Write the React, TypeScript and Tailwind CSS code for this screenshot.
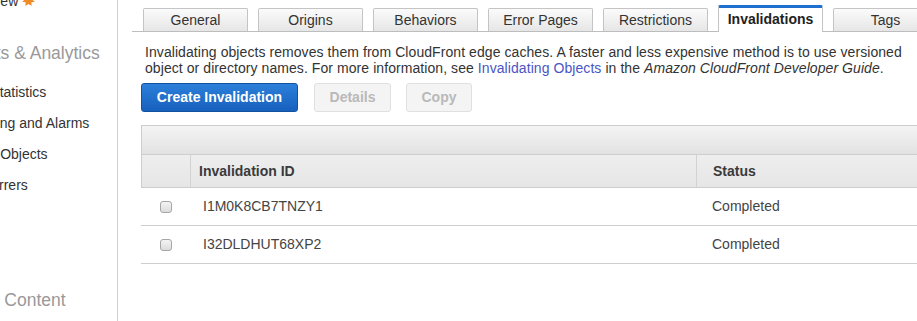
import React from "react";

const TABS = ["General", "Origins", "Behaviors", "Error Pages", "Restrictions", "Invalidations", "Tags"];
const ACTIVE = "Invalidations";

const ROWS = [
  { id: "I1M0K8CB7TNZY1", status: "Completed" },
  { id: "I32DLDHUT68XP2", status: "Completed" },
];

// sidebar is scrolled horizontally; each label keeps its own clip offset
const NAV = [
  { label: "Cache Statistics", cls: "ml-[-54px]" },
  { label: "Monitoring and Alarms", cls: "ml-[-50px]" },
  { label: "Popular Objects", cls: "ml-[-52px]" },
  { label: "Top Referrers", cls: "ml-[-57px]" },
];

function Burst() {
  return (
    <svg width="13" height="13" viewBox="0 0 14 14" className="inline-block ml-[4px] align-[-1px]">
      <path
        d="M7 0 L8.6 3.6 L12.6 2.4 L10.8 6 L14 8.4 L10 9 L10.4 13 L7 10.8 L3.6 13 L4 9 L0 8.4 L3.2 6 L1.4 2.4 L5.4 3.6 Z"
        fill="#f08a24"
      />
    </svg>
  );
}

function Checkbox() {
  return (
    <span className="block w-[12px] h-[12px] rounded-[3px] border border-[#a6a6a6] bg-gradient-to-b from-[#f4f4f4] to-[#dcdcdc]" />
  );
}

export default function App() {
  return (
    <div className="flex w-[917px] h-[321px] overflow-hidden bg-white text-[14px] text-[#333] font-['Liberation_Sans',Arial,sans-serif]">
      {/* Sidebar (scrolled, clipped) */}
      <div className="w-[118px] shrink-0 border-r border-[#cfcfcf] overflow-hidden">
        <div className="mt-[-9px] whitespace-nowrap">
          <div className="ml-[-56px] h-[20px] leading-[20px] text-[#333]">
            What's New
            <Burst />
          </div>
          <div className="ml-[-52px] mt-[30px] h-[24px] leading-[24px] text-[17.5px] text-[#999]">
            Reports &amp; Analytics
          </div>
          <div className="mt-[12px]">
            {NAV.map((n) => (
              <div key={n.label} className={`${n.cls} h-[31px] leading-[31px] text-[#333]`}>
                {n.label}
              </div>
            ))}
          </div>
          <div className="ml-[-55px] mt-[87px] h-[24px] leading-[24px] text-[17.5px] text-[#999]">Private Content</div>
        </div>
      </div>

      {/* Main */}
      <div className="flex-1 min-w-0 pl-[14px] overflow-hidden">
        {/* Tabs */}
        <div className="flex items-end gap-[10px] h-[32px] pl-[11px] border-b border-[#bdbdbd]">
          {TABS.map((t) =>
            t === ACTIVE ? (
              <div
                key={t}
                className="w-[105px] h-[27px] mb-[-1px] shrink-0 flex items-center justify-center bg-white border-x border-[#c4c4c4] border-t-[3px] border-t-[#1f6fce] rounded-t-[2px] font-bold text-[#222] pb-[2px]"
              >
                {t}
              </div>
            ) : (
              <div
                key={t}
                className="w-[105px] h-[23px] shrink-0 flex items-center justify-center border border-b-0 border-[#c4c4c4] rounded-t-[2px] bg-gradient-to-b from-[#fbfbfb] to-[#e6e6e6] text-[#333]"
              >
                {t}
              </div>
            )
          )}
        </div>

        <div className="pl-[9px]">
          <p className="mt-[12px] pl-[4px] leading-[16px] tracking-[0.07px] text-[#333] whitespace-nowrap">
            Invalidating objects removes them from CloudFront edge caches. A faster and less expensive method is to use versioned
            <br />
            object or directory names. For more information, see{" "}
            <span className="text-[#4a55c4]">Invalidating Objects</span> in the{" "}
            <i>Amazon CloudFront Developer Guide</i>.
          </p>

          {/* Buttons */}
          <div className="mt-[7px] flex items-center">
            <button className="w-[157px] h-[29px] rounded-[3px] border border-[#14529f] bg-gradient-to-b from-[#2c80da] to-[#1760bd] text-white font-bold">
              Create Invalidation
            </button>
            <button className="ml-[16px] w-[77px] h-[29px] rounded-[3px] border border-[#e0e0e0] bg-[#f4f4f4] text-[#b9b9b9] font-bold">
              Details
            </button>
            <button className="ml-[15px] w-[66px] h-[29px] rounded-[3px] border border-[#e0e0e0] bg-[#f4f4f4] text-[#b9b9b9] font-bold">
              Copy
            </button>
          </div>

          {/* Table */}
          <div className="mt-[13px] w-[900px]">
            <div className="h-[29px] border-t border-l border-[#cdcdcd] bg-gradient-to-b from-[#f4f4f4] to-[#e2e2e2]" />
            <div className="grid grid-cols-[49px_506px_1fr] h-[34px] border-y border-l border-[#cdcdcd] bg-gradient-to-b from-[#eeeeee] to-[#e6e6e6] font-bold text-[#3a3a3a]">
              <div className="border-r border-[#d2d2d2]" />
              <div className="flex items-center pl-[8px] border-r border-[#d2d2d2]">Invalidation ID</div>
              <div className="flex items-center pl-[16px]">Status</div>
            </div>
            {ROWS.map((r) => (
              <div key={r.id} className="grid grid-cols-[49px_506px_1fr] h-[38px] border-b border-[#cfcfcf] text-[#444]">
                <div className="flex items-center justify-center">
                  <Checkbox />
                </div>
                <div className="flex items-center pl-[13px]">{r.id}</div>
                <div className="flex items-center pl-[16px]">{r.status}</div>
              </div>
            ))}
          </div>
        </div>
      </div>
    </div>
  );
}
